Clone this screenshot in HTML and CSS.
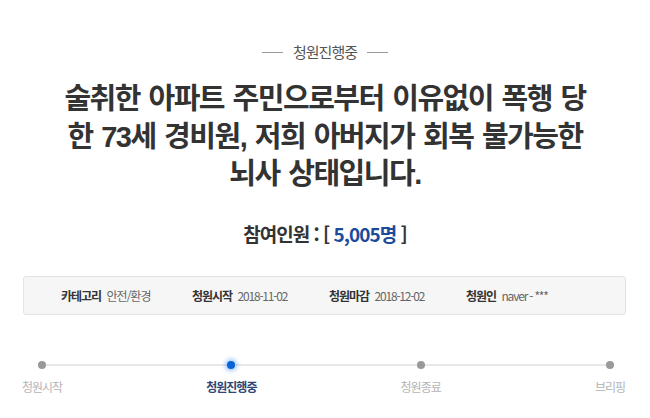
FILE: index.html
```html
<!DOCTYPE html>
<html lang="ko">
<head>
    <meta charset="UTF-8" />
    <meta name="viewport" content="width=device-width, initial-scale=1" />
    <title>청원진행중</title>
    <link rel="stylesheet" href="styles.css">
</head>
<body>

<div class="petition">
    <!-- 진행 상태 -->
    <div class="status">
        <span class="status-line"></span>
        <span class="status-text">청원진행중</span>
        <span class="status-line"></span>
    </div>

    <h1 class="title">술취한 아파트 주민으로부터 이유없이 폭행 당<br>한 73세 경비원, 저희 아버지가 회복 불가능한<br>뇌사 상태입니다.</h1>

    <p class="count">참여인원 : [ <span class="count-num">5,005명</span> ]</p>

    <!-- 청원 정보 -->
    <ul class="info">
        <li><b>카테고리</b> <span>안전/환경</span></li>
        <li><b>청원시작</b> <span class="num">2018-11-02</span></li>
        <li><b>청원마감</b> <span class="num">2018-12-02</span></li>
        <li><b>청원인</b> <span class="num">naver - ***</span></li>
    </ul>

    <!-- 진행 단계 -->
    <ol class="steps">
        <li class="step"><i class="dot"></i><span>청원시작</span></li>
        <li class="step active"><i class="dot"></i><span>청원진행중</span></li>
        <li class="step"><i class="dot"></i><span>청원종료</span></li>
        <li class="step"><i class="dot"></i><span>브리핑</span></li>
    </ol>
</div>

</body>
</html>
```

FILE: styles.css
```css
body {
    font-family: "Noto Sans CJK KR", "Noto Sans", sans-serif;
    background-color: #fff;
    color: #333;
    margin: 0;
}
.petition {
    padding-top: 42px;
}

/* 진행 상태 */
.status {
    display: flex;
    justify-content: center;
    align-items: center;
    gap: 10px;
    height: 20px;
}
.status-line {
    width: 21px;
    height: 1px;
    background-color: #999;
}
.status-text {
    font-size: 15px;
    letter-spacing: -1px;
    color: #555;
    line-height: 20px;
}

.title {
    margin: 19px 0 0;
    font-family: "Liberation Sans", "Noto Sans CJK KR", sans-serif;
    font-size: 29px;
    line-height: 37.5px;
    letter-spacing: -1.5px;
    word-spacing: 2px;
    font-weight: bold;
    text-align: center;
    color: #333;
}

.count {
    margin: 28px 0 0;
    font-size: 19px;
    line-height: 24px;
    letter-spacing: -1px;
    font-weight: bold;
    text-align: center;
    color: #333;
}
.count-num {
    color: #1c4b9c;
}

/* 청원 정보 */
.info {
    list-style: none;
    margin: 30px 24px 0 23px;
    padding: 0 0 0 37px;
    height: 37px;
    display: grid;
    grid-template-columns: 131px 137px 137px auto;
    align-items: center;
    background-color: #f6f6f6;
    border: 1px solid #e3e3e3;
    border-radius: 3px;
    font-size: 12px;
    letter-spacing: -1px;
}
.info b {
    color: #333;
    margin-right: 3px;
}
.info span {
    color: #666;
}
.info .num {
    letter-spacing: -1.2px;
}

/* 진행 단계 */
.steps {
    list-style: none;
    margin: 46px 0 0 2px;
    padding: 0;
    width: 648px;
    display: flex;
    justify-content: space-between;
    position: relative;
}
.steps::before {
    content: "";
    position: absolute;
    left: 40px;
    right: 40px;
    top: 3px;
    height: 2px;
    background-color: #e8e8e8;
}
.step {
    width: 80px;
    display: flex;
    flex-direction: column;
    align-items: center;
    gap: 10px;
    position: relative;
}
.dot {
    width: 8px;
    height: 8px;
    border-radius: 50%;
    background-color: #999;
}
.step span {
    font-size: 12px;
    line-height: 16px;
    letter-spacing: -1px;
    color: #b4b4b4;
}
.step.active .dot {
    background-color: #0a63d6;
    box-shadow: 0 0 4px 2px rgba(40, 130, 255, 0.45);
}
.step.active span {
    color: #2c4778;
    font-weight: bold;
}
```
